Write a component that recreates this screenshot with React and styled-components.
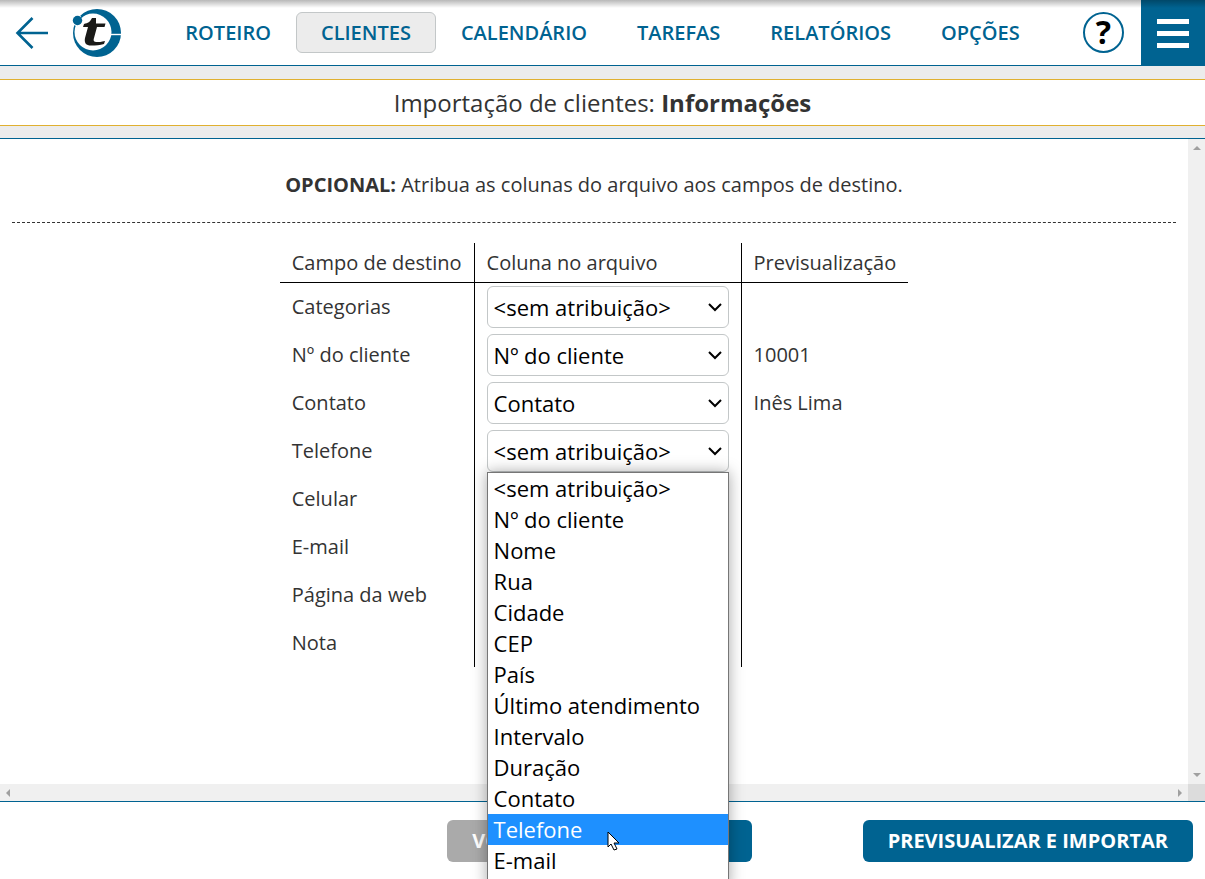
import React from 'react';
import styled, { createGlobalStyle, css } from 'styled-components';

const blue = '#006391';
const gold = '#e0b030';
const grey = '#ececec';

const GlobalStyle = createGlobalStyle`
  *,
  *::before,
  *::after {
    box-sizing: border-box;
  }

  body {
    background: #fff;
    color: #333;
    font-family: 'Open Sans', 'Noto Sans', sans-serif;
    font-size: 20px;
    margin: 0;
    overflow: hidden;
  }

  button,
  select {
    font-family: inherit;
  }
`;

const Page = styled.div`
  display: flex;
  flex-direction: column;
  height: 100vh;
  position: relative;

  &::before {
    background: linear-gradient(rgba(0, 0, 0, 0.28), rgba(0, 0, 0, 0));
    content: '';
    height: 8px;
    left: 0;
    pointer-events: none;
    position: absolute;
    right: 0;
    top: 0;
  }
`;

const Header = styled.header`
  border-bottom: 1px solid ${blue};
  display: grid;
  flex: none;
  grid-template-columns: 1fr auto 1fr;
  height: 66px;
`;

const HeaderStart = styled.div`
  align-items: center;
  display: flex;
  gap: 22px;
  padding-left: 14px;
`;

const HeaderEnd = styled.div`
  align-items: center;
  display: flex;
  gap: 17px;
  justify-content: flex-end;
`;

const IconButton = styled.button`
  background: none;
  border: 0;
  cursor: pointer;
  display: flex;
  padding: 0;
`;

const MenuButton = styled(IconButton)`
  align-items: center;
  align-self: stretch;
  background: ${blue};
  justify-content: center;
  padding-top: 2px;
  width: 64px;
`;

const HelpButton = styled(IconButton)`
  align-items: center;
  border: 2px solid ${blue};
  border-radius: 50%;
  color: #000;
  font-size: 32px;
  font-weight: 700;
  height: 41px;
  justify-content: center;
  line-height: 35px;
  padding-bottom: 2px;
  width: 41px;
`;

const Nav = styled.nav`
  align-items: center;
  display: flex;
`;

const NavLink = styled.a`
  border: 1px solid transparent;
  border-radius: 6px;
  color: ${blue};
  font-size: 20px;
  font-weight: 600;
  line-height: 39px;
  padding: 0 24px;
  text-decoration: none;

  ${({ $active }) =>
    $active &&
    css`
      background: ${grey};
      border-color: #c3c7c8;
    `}
`;

const TitleBand = styled.div`
  background: ${grey};
  border-bottom: 1px solid ${blue};
  flex: none;
  padding: 13px 0 12px;
`;

const Title = styled.h1`
  background: #fff;
  border: solid ${gold};
  border-width: 1px 0;
  font-size: 24px;
  font-weight: 400;
  line-height: 45px;
  margin: 0;
  text-align: center;
`;

const ScrollArea = styled.div`
  display: grid;
  flex: 1;
  grid-template-columns: 1fr 17px;
  grid-template-rows: 1fr 17px;
  min-height: 0;
`;

const Content = styled.main`
  min-height: 0;
  padding: 0 12px;
`;

const ScrollTrack = styled.div`
  align-items: center;
  background: #f0f0f0;
  display: flex;
  flex-direction: ${({ $vertical }) => ($vertical ? 'column' : 'row')};
  justify-content: space-between;
  padding: ${({ $vertical }) => ($vertical ? '7px 0' : '0 6px')};
`;

const ScrollCorner = styled.div`
  background: #dcdcdc;
`;

const Intro = styled.p`
  border-bottom: 1px dashed #333;
  line-height: 26px;
  margin: 0 0 20px;
  padding: 33px 0 24px;
  text-align: center;
`;

const Table = styled.table`
  border-collapse: separate;
  border-spacing: 0;
  margin: 0 auto;
`;

const HeadCell = styled.th`
  border-bottom: 1px solid #000;
  border-right: ${({ $last }) => ($last ? '0' : '1px solid #000')};
  font-weight: 400;
  height: 40px;
  line-height: 26px;
  padding: 0 12px;
  text-align: left;
`;

const Cell = styled.td`
  border-right: ${({ $last }) => ($last ? '0' : '1px solid #000')};
  height: 48px;
  line-height: 26px;
  padding: 3px 12px;
`;

const SelectBox = styled.div`
  position: relative;
  width: 242px;

  > svg {
    pointer-events: none;
    position: absolute;
    right: 7px;
    top: 16px;
  }
`;

const Select = styled.select`
  appearance: none;
  background: #fff;
  border: 1px solid #c3c7c8;
  border-radius: 6px;
  color: #000;
  display: block;
  font-size: 22px;
  height: 42px;
  padding: 0 28px 0 6px;
  width: 100%;
`;

const OptionList = styled.ul`
  background: #fff;
  border: 1px solid #767676;
  box-shadow: 0 0 14px rgba(0, 0, 0, 0.35);
  color: #000;
  font-size: 22px;
  left: 0;
  line-height: 31px;
  list-style: none;
  margin: 0;
  padding: 0 0 12px;
  position: absolute;
  right: 0;
  top: 42px;
  z-index: 1;
`;

const Option = styled.li`
  padding: 0 6px;
  position: relative;

  ${({ $highlighted }) =>
    $highlighted &&
    css`
      background: #1e90ff;
      color: #fff;
      z-index: 1;
    `}

  svg {
    left: 119px;
    position: absolute;
    top: 17px;
  }
`;

const Footer = styled.footer`
  align-items: center;
  border-top: 1px solid ${blue};
  display: grid;
  flex: none;
  grid-template-columns: 1fr auto 1fr;
  height: 78px;
  padding: 0 12px;
`;

const ButtonGroup = styled.div`
  display: flex;
  gap: 4px;
  grid-column: 2;
  padding-right: 6px;
`;

const Button = styled.button`
  background: ${({ $muted }) => ($muted ? '#aaa' : blue)};
  border: 0;
  border-radius: 6px;
  color: #fff;
  cursor: pointer;
  font-size: 20px;
  font-weight: 700;
  height: 42px;
  justify-self: end;
  padding: 0 25px;
`;

const BackIcon = () => (
  <svg width="36" height="34" viewBox="0 0 36 34" fill="none" stroke={blue} strokeWidth="2.6">
    <path d="M18.5 2 3.5 17l15 15M3.5 17H34" />
  </svg>
);

const Logo = () => (
  <svg width="50" height="50" viewBox="0 0 50 50">
    <circle cx="25" cy="25" r="24" fill={blue} />
    <circle cx="21" cy="24" r="18.5" fill="#fff" />
    <path d="M38 26.5h12" stroke="#fff" strokeWidth="1.4" />
    <circle cx="5.5" cy="12.5" r="5.5" fill="#fff" />
    <circle cx="5.5" cy="12.5" r="4.7" fill={blue} />
    <path d="M9 9.5Q11 7 14 5" fill="none" stroke={blue} strokeWidth="1.6" />
    <path
      fill="#1a1a18"
      d="M24 10h-4c-2 4-4 5-8 6l-1 3h5l-3 11c-1 5 1 7.500 6 7.500 5 0 9 0 13-1.500l1-3c-4 1-6 1-8 1-3 0-4-1-3-4l3-11h7.500l1-3.500h-9.500z"
    />
  </svg>
);

const MenuIcon = () => (
  <svg width="32" height="29" viewBox="0 0 32 29" fill="#fff">
    <path d="M0 0h32v5H0zM0 12h32v5H0zM0 24h32v5H0z" />
  </svg>
);

const Chevron = () => (
  <svg width="14" height="10" viewBox="0 0 14 10" fill="none" stroke="#000" strokeWidth="2">
    <path d="m1 2 6 6 6-6" />
  </svg>
);

const arrows = {
  up: 'M0 4 4 0l4 4z',
  down: 'M0 0h8L4 4z',
  left: 'M4 0v8L0 4z',
  right: 'M0 0v8l4-4z',
};

const ScrollArrow = ({ direction }) => {
  const vertical = direction === 'up' || direction === 'down';
  return (
    <svg width={vertical ? 8 : 4} height={vertical ? 4 : 8} fill="#a0a0a0">
      <path d={arrows[direction]} />
    </svg>
  );
};

const Pointer = () => (
  <svg width="13" height="21" viewBox="0 0 13 21" fill="#fff" stroke="#000">
    <path d="M1 1v15l3-3 3 6 3-1-3-6h5Z" />
  </svg>
);

const navItems = ['ROTEIRO', 'CLIENTES', 'CALENDÁRIO', 'TAREFAS', 'RELATÓRIOS', 'OPÇÕES'];

const columns = [
  '<sem atribuição>',
  'Nº do cliente',
  'Nome',
  'Rua',
  'Cidade',
  'CEP',
  'País',
  'Último atendimento',
  'Intervalo',
  'Duração',
  'Contato',
  'Telefone',
  'E-mail',
];

const fields = [
  { label: 'Categorias', column: columns[0] },
  { label: 'Nº do cliente', column: 'Nº do cliente', preview: '10001' },
  { label: 'Contato', column: 'Contato', preview: 'Inês Lima' },
  { label: 'Telefone', column: columns[0], open: true },
  { label: 'Celular', column: columns[0] },
  { label: 'E-mail', column: columns[0] },
  { label: 'Página da web', column: columns[0] },
  { label: 'Nota', column: columns[0] },
];

const FieldRow = ({ id, label, column, preview = '', open = false }) => (
  <tr>
    <Cell>
      <label htmlFor={id}>{label}</label>
    </Cell>
    <Cell>
      <SelectBox>
        <Select id={id} defaultValue={column}>
          {columns.map((name) => (
            <option key={name}>{name}</option>
          ))}
        </Select>
        <Chevron />
        {open && (
          <OptionList role="listbox" aria-label={label}>
            {columns.map((name) => (
              <Option
                key={name}
                role="option"
                aria-selected={name === label}
                $highlighted={name === label}
              >
                {name}
                {name === label && <Pointer />}
              </Option>
            ))}
          </OptionList>
        )}
      </SelectBox>
    </Cell>
    <Cell $last>{preview}</Cell>
  </tr>
);

const App = () => (
  <Page>
    <GlobalStyle />
    <Header>
      <HeaderStart>
        <IconButton aria-label="Voltar">
          <BackIcon />
        </IconButton>
        <Logo />
      </HeaderStart>
      <Nav>
        {navItems.map((item) => (
          <NavLink key={item} href="#" $active={item === 'CLIENTES'}>
            {item}
          </NavLink>
        ))}
      </Nav>
      <HeaderEnd>
        <HelpButton aria-label="Ajuda">?</HelpButton>
        <MenuButton aria-label="Menu">
          <MenuIcon />
        </MenuButton>
      </HeaderEnd>
    </Header>
    <TitleBand>
      <Title>
        Importação de clientes: <b>Informações</b>
      </Title>
    </TitleBand>
    <ScrollArea>
      <Content>
        <Intro>
          <b>OPCIONAL:</b> Atribua as colunas do arquivo aos campos de destino.
        </Intro>
        <Table>
          <thead>
            <tr>
              <HeadCell>Campo de destino</HeadCell>
              <HeadCell>Coluna no arquivo</HeadCell>
              <HeadCell $last>Previsualização</HeadCell>
            </tr>
          </thead>
          <tbody>
            {fields.map((field, index) => (
              <FieldRow key={field.label} id={`field-${index}`} {...field} />
            ))}
          </tbody>
        </Table>
      </Content>
      <ScrollTrack $vertical>
        <ScrollArrow direction="up" />
        <ScrollArrow direction="down" />
      </ScrollTrack>
      <ScrollTrack>
        <ScrollArrow direction="left" />
        <ScrollArrow direction="right" />
      </ScrollTrack>
      <ScrollCorner />
    </ScrollArea>
    <Footer>
      <ButtonGroup>
        <Button $muted>VOLTAR</Button>
        <Button>CONTINUAR</Button>
      </ButtonGroup>
      <Button>PREVISUALIZAR E IMPORTAR</Button>
    </Footer>
  </Page>
);

export default App;
